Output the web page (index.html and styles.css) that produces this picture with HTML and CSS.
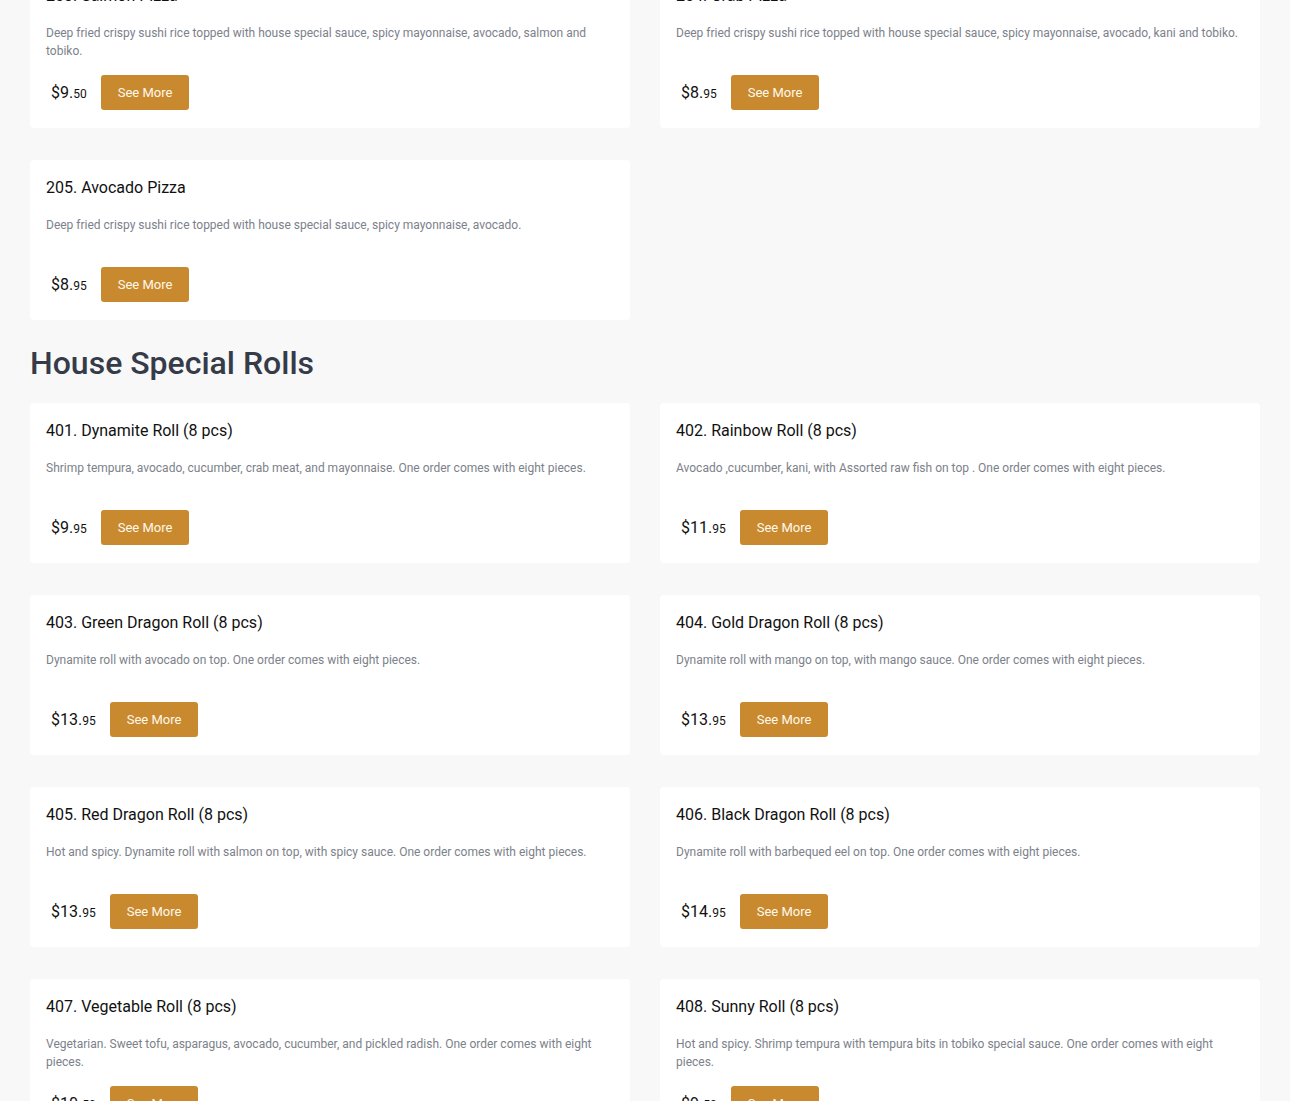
FILE: index.html
```html
<!DOCTYPE html>
<html>
<head>
<meta charset="utf-8">
<link rel="stylesheet" href="styles.css">
</head>
<body>
<main class="menu">
  <section class="section">
    <div class="grid">
      <div class="card">
        <h3 class="title">203. Salmon Pizza</h3>
        <p class="desc">Deep fried crispy sushi rice topped with house special sauce, spicy mayonnaise, avocado, salmon and tobiko.</p>
        <div class="buy"><span class="price">$9.<small>50</small></span><button class="btn">See More</button></div>
      </div>
      <div class="card">
        <h3 class="title">204. Crab Pizza</h3>
        <p class="desc">Deep fried crispy sushi rice topped with house special sauce, spicy mayonnaise, avocado, kani and tobiko.</p>
        <div class="buy"><span class="price">$8.<small>95</small></span><button class="btn">See More</button></div>
      </div>
      <div class="card">
        <h3 class="title">205. Avocado Pizza</h3>
        <p class="desc">Deep fried crispy sushi rice topped with house special sauce, spicy mayonnaise, avocado.</p>
        <div class="buy"><span class="price">$8.<small>95</small></span><button class="btn">See More</button></div>
      </div>
    </div>
  </section>
  <section class="section">
    <h2 class="heading">House Special Rolls</h2>
    <div class="grid">
      <div class="card">
        <h3 class="title">401. Dynamite Roll (8 pcs)</h3>
        <p class="desc">Shrimp tempura, avocado, cucumber, crab meat, and mayonnaise. One order comes with eight pieces.</p>
        <div class="buy"><span class="price">$9.<small>95</small></span><button class="btn">See More</button></div>
      </div>
      <div class="card">
        <h3 class="title">402. Rainbow Roll (8 pcs)</h3>
        <p class="desc">Avocado ,cucumber, kani, with Assorted raw fish on top . One order comes with eight pieces.</p>
        <div class="buy"><span class="price">$11.<small>95</small></span><button class="btn">See More</button></div>
      </div>
      <div class="card">
        <h3 class="title">403. Green Dragon Roll (8 pcs)</h3>
        <p class="desc">Dynamite roll with avocado on top. One order comes with eight pieces.</p>
        <div class="buy"><span class="price">$13.<small>95</small></span><button class="btn">See More</button></div>
      </div>
      <div class="card">
        <h3 class="title">404. Gold Dragon Roll (8 pcs)</h3>
        <p class="desc">Dynamite roll with mango on top, with mango sauce. One order comes with eight pieces.</p>
        <div class="buy"><span class="price">$13.<small>95</small></span><button class="btn">See More</button></div>
      </div>
      <div class="card">
        <h3 class="title">405. Red Dragon Roll (8 pcs)</h3>
        <p class="desc">Hot and spicy. Dynamite roll with salmon on top, with spicy sauce. One order comes with eight pieces.</p>
        <div class="buy"><span class="price">$13.<small>95</small></span><button class="btn">See More</button></div>
      </div>
      <div class="card">
        <h3 class="title">406. Black Dragon Roll (8 pcs)</h3>
        <p class="desc">Dynamite roll with barbequed eel on top. One order comes with eight pieces.</p>
        <div class="buy"><span class="price">$14.<small>95</small></span><button class="btn">See More</button></div>
      </div>
      <div class="card">
        <h3 class="title">407. Vegetable Roll (8 pcs)</h3>
        <p class="desc">Vegetarian. Sweet tofu, asparagus, avocado, cucumber, and pickled radish. One order comes with eight pieces.</p>
        <div class="buy"><span class="price">$10.<small>50</small></span><button class="btn">See More</button></div>
      </div>
      <div class="card">
        <h3 class="title">408. Sunny Roll (8 pcs)</h3>
        <p class="desc">Hot and spicy. Shrimp tempura with tempura bits in tobiko special sauce. One order comes with eight pieces.</p>
        <div class="buy"><span class="price">$9.<small>50</small></span><button class="btn">See More</button></div>
      </div>
    </div>
  </section>
</main>
</body>
</html>
```
FILE: styles.css
```css
html, body {
  margin: 0;
  padding: 0;
  background: #f8f8f8;
  font-family: Roboto, "Liberation Sans", sans-serif;
  color: #111;
  overflow: hidden;
}
.menu {
  padding: 0 30px;
  margin-top: -32px;
}
.grid {
  display: grid;
  grid-template-columns: 600px 600px;
  column-gap: 30px;
  row-gap: 32px;
}
.card {
  background: #fff;
  border-radius: 4px;
  padding: 17px 16px 18px;
  height: 160px;
  box-sizing: border-box;
  display: flex;
  flex-direction: column;
}
.title {
  margin: 0;
  font-size: 16px;
  font-weight: 400;
  line-height: 22px;
  color: #111;
}
.desc {
  margin: 17px 0 0;
  font-size: 12px;
  line-height: 18px;
  min-height: 36px;
  color: #7c818a;
}
.buy {
  margin-top: 15px;
  display: flex;
  align-items: center;
  gap: 14px;
}
.price {
  padding-left: 5px;
  font-size: 16px;
  color: #111;
}
.price small {
  font-size: 12px;
}
.btn {
  border: 0;
  background: #c98a2f;
  color: #fff8ec;
  font-family: Roboto, "Liberation Sans", sans-serif;
  font-size: 13px;
  line-height: 15px;
  padding: 10px 17px;
  border-radius: 3px;
}
.heading {
  margin: 23px 0 20px;
  font-size: 32px;
  line-height: 40px;
  font-weight: 500;
  color: #353b48;
}
```
